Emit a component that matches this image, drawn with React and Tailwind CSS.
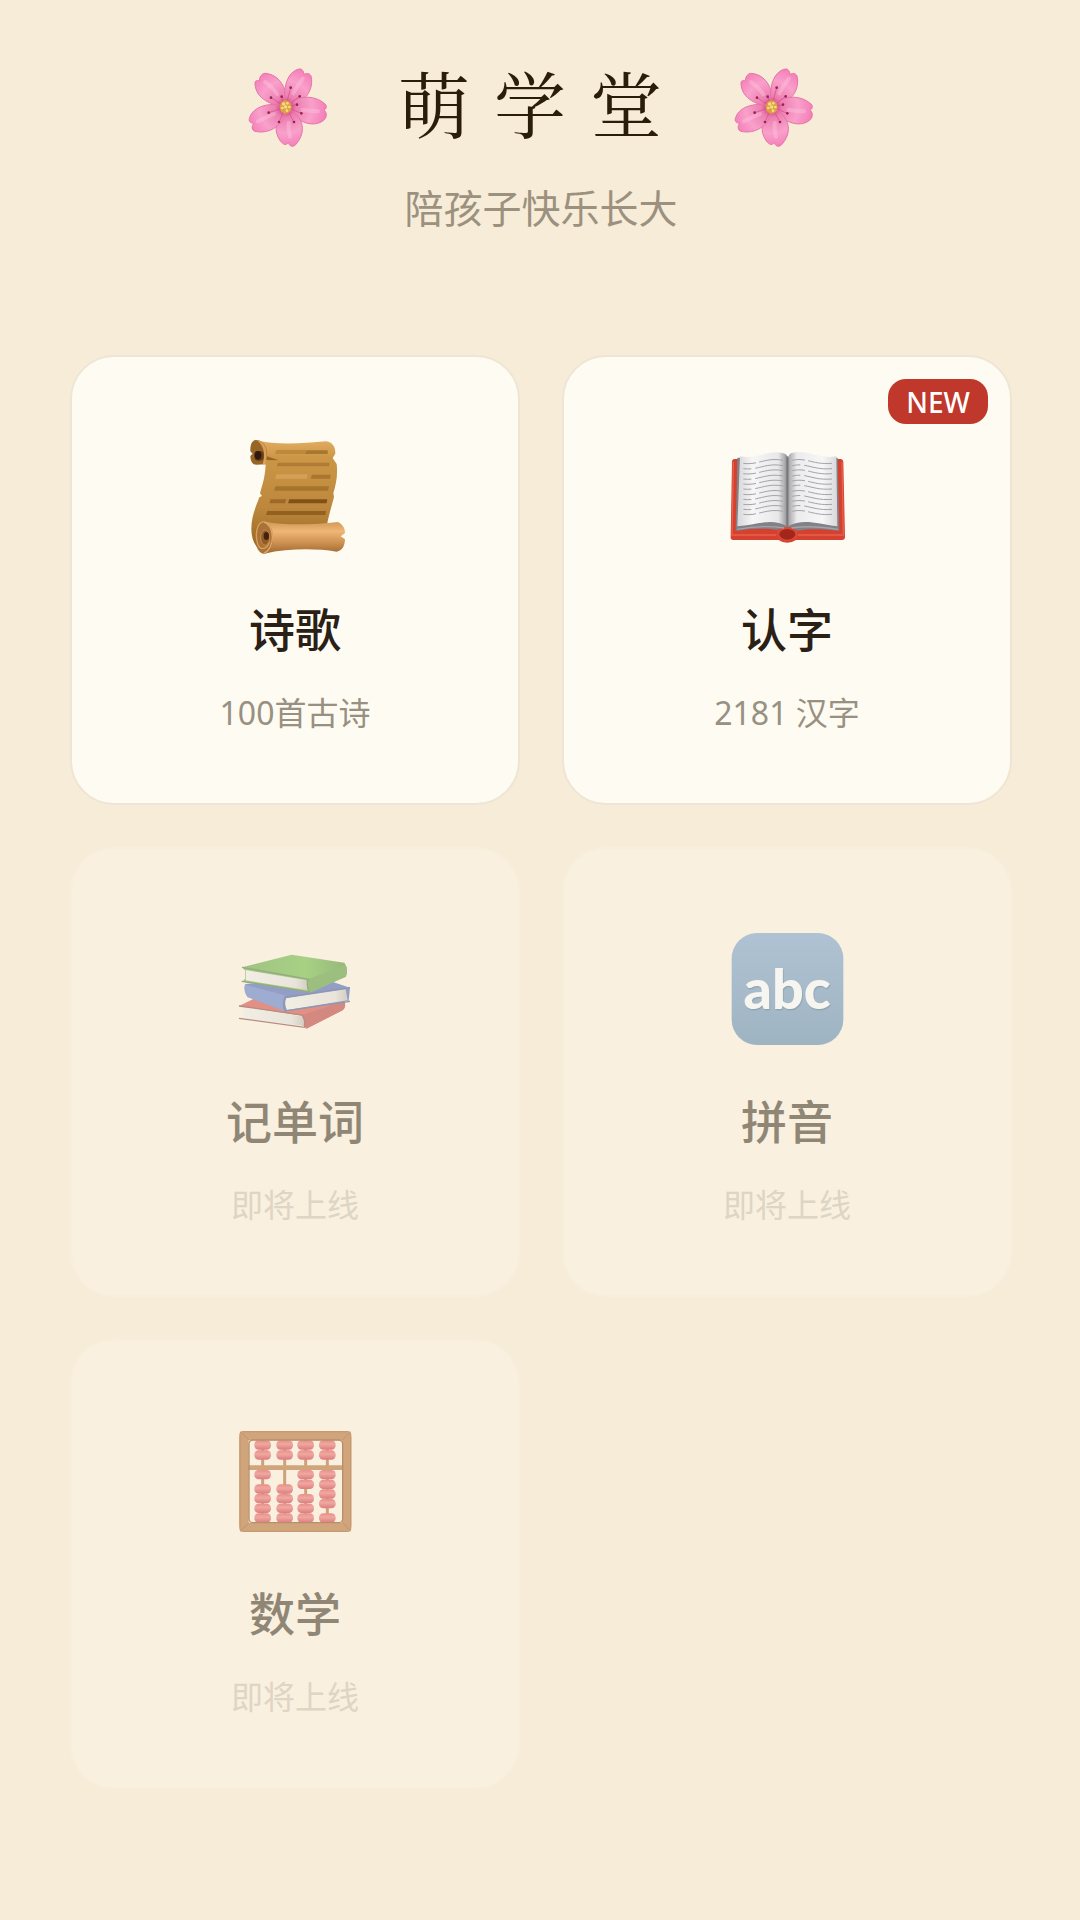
const sans = "font-['Noto_Sans','Noto_Sans_CJK_SC',sans-serif]";
const serif = "font-['Noto_Serif_CJK_SC','Noto_Serif_SC','Songti_SC','Noto_Sans_CJK_SC',serif]";

function Blossom({ id, className }) {
  const dots = [
    [164, 95],
    [191, 121],
    [105, 125],
    [137, 122],
    [98, 170],
    [196, 172],
    [129, 198],
    [174, 198],
    [183, 146],
  ];

  return (
    <svg viewBox="0 0 312 312" className={className} aria-hidden="true">
      <defs>
        <radialGradient id={id} gradientUnits="userSpaceOnUse" cx="149" cy="153" r="122">
          <stop offset="0.08" stopColor="#d2407f" />
          <stop offset="0.26" stopColor="#ec7fb0" />
          <stop offset="0.65" stopColor="#f9a0cb" />
          <stop offset="1" stopColor="#f47fb8" />
        </radialGradient>
      </defs>
      <g fill={`url(#${id})`} stroke="#e873aa" strokeWidth="3" strokeLinejoin="round">
        <path d="M149 153C108 148 60 130 57 84C56 73 63 72 70 75C70 63 76 54 86 52C126 54 158 92 149 153Z" />
        <path d="M149 153C138 96 154 46 190 39C199 38 202 45 204 55C214 50 224 52 226 64C233 104 204 146 149 153Z" />
        <path d="M149 153C172 120 232 112 267 144C274 151 271 158 264 163C273 169 273 181 266 190C240 216 186 206 149 153Z" />
        <path d="M149 153C108 188 116 242 140 262C147 268 153 266 157 259C160 271 169 274 178 267C209 234 211 184 149 153Z" />
        <path d="M149 153C110 136 50 148 40 188C38 198 44 201 53 202C46 211 47 223 57 226C98 236 150 208 149 153Z" />
      </g>
      <g fill="none" stroke="#ffc6e0" strokeWidth="12" strokeLinecap="round" opacity="0.4">
        <path d="M87 78Q111 94 124 115" />
        <path d="M200 68Q184 88 172 112" />
        <path d="M246 166Q220 164 200 162" />
        <path d="M162 242Q156 220 158 200" />
        <path d="M66 196Q90 184 114 174" />
      </g>
      <g stroke="#d24c8a" strokeWidth="2">
        {dots.map(([x, y]) => (
          <path key={`${x}-${y}`} d={`M149 153L${x} ${y}`} />
        ))}
      </g>
      <g fill="#96244f">
        {dots.map(([x, y]) => (
          <circle key={`${x}-${y}`} cx={x} cy={y} r="4" />
        ))}
      </g>
      <ellipse cx="149" cy="153" rx="18" ry="20" fill="#dda044" />
      <g fill="#f6dc80">
        <circle cx="143" cy="144" r="5" />
        <circle cx="154" cy="142" r="4" />
        <circle cx="149" cy="153" r="5" />
        <circle cx="160" cy="153" r="4" />
        <circle cx="139" cy="156" r="4" />
        <circle cx="153" cy="164" r="4" />
      </g>
    </svg>
  );
}

function ScrollIcon() {
  return (
    <svg viewBox="0 0 450 450" className="size-[150px]" aria-hidden="true">
      <defs>
        <linearGradient id="sheet" x1="0" y1="0" x2="0" y2="1">
          <stop offset="0" stopColor="#e2ad62" />
          <stop offset="0.16" stopColor="#cc9646" />
          <stop offset="0.6" stopColor="#bd883d" />
          <stop offset="1" stopColor="#96621f" />
        </linearGradient>
        <linearGradient id="roll" x1="0" y1="0" x2="0" y2="1">
          <stop offset="0" stopColor="#d09956" />
          <stop offset="0.3" stopColor="#efb675" />
          <stop offset="0.65" stopColor="#ce9252" />
          <stop offset="1" stopColor="#9f662d" />
        </linearGradient>
      </defs>
      <path
        d="M108 63C170 80 250 73 318 67C338 70 346 83 346 104L338 117L350 135C354 168 348 197 340 222L342 234C334 265 326 289 321 318L143 399C112 399 94 368 94 330C94 290 109 260 118 235L126 231L120 223C128 195 137 170 137 127L100 64Z"
        fill="url(#sheet)"
      />
      <path d="M108 63C94 65 91 78 91 97L98 104L91 111C92 128 97 137 109 137L137 136L137 123L176 124L141 112C143 84 130 64 108 63Z" fill="#976526" />
      <path d="M108 63C130 65 142 84 140 113L137 136L128 136C139 100 128 74 108 63Z" fill="#d8a05a" />
      <rect x="103" y="96" width="28" height="29" rx="10" fill="#6a3d19" />
      <ellipse cx="114" cy="109" rx="10" ry="13" fill="#2f190f" />
      <g fill="#a97630">
        <path d="M169 93H258V105H165Z" fill="#bd893d" />
        <path d="M260 94H323V105H255Z" />
        <path d="M174 131H328V142H170Z" fill="#ae7c34" />
        <path d="M169 166H263L260 179H166Z" fill="#d2a057" />
        <path d="M276 167H332L330 179H272Z" />
        <path d="M167 202H327L324 215H162Z" fill="#a6742d" />
        <path d="M152 241H199L195 253H148Z" fill="#9c6a27" />
        <path d="M208 241H322L320 253H204Z" fill="#835118" />
        <path d="M142 276H318L316 288H138Z" fill="#93611f" />
      </g>
      <path d="M136 308C200 321 290 316 353 309C368 315 375 328 375 342L362 352L375 361C374 382 367 395 350 398C285 388 208 388 132 404Z" fill="url(#roll)" />
      <ellipse cx="132" cy="356" rx="27" ry="48" fill="#a97238" />
      <path d="M132 308C108 310 105 350 114 377C123 397 145 389 149 365" fill="none" stroke="#d5a059" strokeWidth="4" />
      <path d="M132 309C165 319 166 388 132 403" fill="none" stroke="#e0a968" strokeWidth="4" />
      <path d="M133 333C153 332 156 373 135 379C119 377 117 339 133 333Z" fill="#925c29" stroke="#c58b49" strokeWidth="3" />
      <ellipse cx="139" cy="351" rx="8" ry="12" fill="#43230f" />
    </svg>
  );
}

function OpenBookIcon() {
  const lines = [91, 107, 122, 138, 153, 168, 184, 199, 214, 229, 244];

  return (
    <svg viewBox="6 -30 450 450" className="size-[150px]" aria-hidden="true">
      <defs>
        <linearGradient id="leftPage" x1="0" x2="1">
          <stop offset="0" stopColor="#d6d6d8" />
          <stop offset="0.3" stopColor="#f6f6f7" />
          <stop offset="0.82" stopColor="#e8e8ea" />
          <stop offset="1" stopColor="#939397" />
        </linearGradient>
        <linearGradient id="rightPage" x1="0" x2="1">
          <stop offset="0" stopColor="#a2a2a6" />
          <stop offset="0.18" stopColor="#ececee" />
          <stop offset="0.7" stopColor="#f6f6f7" />
          <stop offset="1" stopColor="#d8d8db" />
        </linearGradient>
      </defs>
      <path d="M74 90H391Q399 90 400 100L405 324Q405 333 395 333H258Q246 341 232 341Q216 341 206 333H70Q61 333 62 324L66 99Q66 90 74 90Z" fill="#d4412f" />
      <path d="M70 99L66 322M396 99L400 322" stroke="#ea5f4d" strokeWidth="4" />
      <path d="M67 318H199M263 318H398" stroke="#e55744" strokeWidth="6" />
      <ellipse cx="232" cy="314" rx="31" ry="23" fill="#dc4837" />
      <ellipse cx="232" cy="316" rx="24" ry="16" fill="#a3261c" />
      <path d="M82 86L77 306Q150 294 202 303Q222 292 233 294Q246 294 262 305Q320 296 388 306L383 86Z" fill="#818187" />
      <path d="M82 301Q160 287 222 297M245 297Q304 288 384 301" fill="none" stroke="#a4a4a9" strokeWidth="4" />
      <path d="M90 82C145 91 174 61 221 73Q232 76 232 86L231 292C187 266 144 286 82 292Z" fill="url(#leftPage)" />
      <path d="M379 82C322 91 292 60 245 72Q235 76 235 87L234 292C280 267 322 285 382 292Z" fill="url(#rightPage)" />
      <path d="M232 82V292" stroke="#77777c" strokeWidth="6" />
      <g fill="none" stroke="#a3a3a7" strokeWidth="3">
        {lines.map((y, i) => (
          <g key={y} strokeDasharray={i % 2 ? "24 12 200" : "38 10 200"}>
            <path d={`M100 ${y + 12}C144 ${y + 18} 168 ${y - 7} 219 ${y + 3}`} />
            <path d={`M247 ${y + 3}C288 ${y - 7} 309 ${y + 17} 366 ${y + 12}`} />
          </g>
        ))}
      </g>
    </svg>
  );
}

function BooksIcon() {
  return (
    <svg viewBox="0 -54 450 450" className="size-[150px] opacity-60" aria-hidden="true">
      <defs>
        <linearGradient id="greenCover" x1="0" x2="1">
          <stop offset="0" stopColor="#65a545" />
          <stop offset="0.6" stopColor="#72bd49" />
          <stop offset="1" stopColor="#569438" />
        </linearGradient>
        <linearGradient id="pages" x1="0" x2="1">
          <stop offset="0" stopColor="#f0eee9" />
          <stop offset="0.8" stopColor="#e0ddd7" />
          <stop offset="1" stopColor="#bcb9b1" />
        </linearGradient>
      </defs>
      <path d="M57 231L106 207L372 216Q381 232 369 243L260 299L246 286V260Z" fill="#d4504a" />
      <path d="M250 257L373 215Q379 232 368 244L258 299Q247 280 250 257Z" fill="#bd4542" />
      <path d="M67 234L245 262Q256 274 250 291L66 268Z" fill="url(#pages)" />
      <path d="M57 231L247 258Q259 276 253 295L57 268" fill="none" stroke="#8a4a44" strokeWidth="4" />
      <path d="M84 164L319 152L390 176L386 216L196 246L83 204Q70 184 76 165Z" fill="#4f69b4" />
      <path d="M75 167L194 199Q183 220 192 246L82 204Q69 187 75 167Z" fill="#6480c8" />
      <path d="M198 208L377 181L383 214L201 243Q192 226 198 208Z" fill="url(#pages)" />
      <path d="M390 176L198 204Q186 222 195 246L390 217" fill="none" stroke="#4c5c92" strokeWidth="4" />
      <path d="M66 115L215 77L373 101Q386 119 378 143L273 189L67 158L75 149V124Z" fill="url(#greenCover)" />
      <path d="M264 151L376 107Q386 124 376 143L272 189Q257 171 264 151Z" fill="#5f9f42" />
      <path d="M77 123L257 153Q266 166 260 183L77 154Z" fill="url(#pages)" />
      <path d="M66 115L265 151Q257 168 269 189L65 157" fill="none" stroke="#567d43" strokeWidth="4" />
    </svg>
  );
}

function AbcIcon() {
  return (
    <svg viewBox="6 -9 450 450" className="size-[150px]" aria-hidden="true">
      <defs>
        <linearGradient id="tile" x1="0" y1="0" x2="0" y2="1">
          <stop offset="0" stopColor="#afc2d3" />
          <stop offset="1" stopColor="#9fb4c2" />
        </linearGradient>
      </defs>
      <rect x="65" y="57" width="335" height="336" rx="76" fill="url(#tile)" />
      <text
        x="231"
        y="285"
        fontSize="167"
        textAnchor="middle"
        fill="#f7f5ef"
        className="font-['Lato',sans-serif] font-black drop-shadow-[2px_4px_2px_#8fa3b1]"
      >
        abc
      </text>
    </svg>
  );
}

function AbacusIcon() {
  // bead centres on each rod, top to bottom
  const rods = [
    { x: 128, beads: [108, 138, 197, 240, 269, 298, 327] },
    { x: 194, beads: [108, 138, 240, 269, 298, 327] },
    { x: 257, beads: [108, 138, 197, 226, 269, 298, 327] },
    { x: 322, beads: [108, 138, 197, 226, 255, 284, 327] },
  ];

  return (
    <svg viewBox="0 -18 450 450" className="size-[150px]" aria-hidden="true">
      <defs>
        <linearGradient id="bead" x1="0" y1="0" x2="0" y2="1">
          <stop offset="0" stopColor="#e78f89" />
          <stop offset="0.4" stopColor="#f0a8a0" />
          <stop offset="1" stopColor="#dd7d80" />
        </linearGradient>
      </defs>
      {rods.map(({ x, beads }) => (
        <g key={x}>
          <path d={`M${x} 92V340`} stroke="#cda27a" strokeWidth="9" />
          {beads.map((y) => (
            <rect key={y} x={x - 25} y={y - 14} width="50" height="28" rx="13" fill="url(#bead)" />
          ))}
        </g>
      ))}
      <path d="M84 176H370" stroke="#d0a57c" strokeWidth="14" />
      <rect x="72" y="80" width="308" height="275" rx="6" fill="none" stroke="#d0a57c" strokeWidth="28" />
      <rect x="87" y="93" width="281" height="248" rx="12" fill="none" stroke="#b88d68" strokeWidth="4" />
      <rect x="60" y="68" width="332" height="299" rx="10" fill="none" stroke="#c79a70" strokeWidth="4" />
      <path d="M60 68L87 93M392 68L368 93M60 367L87 341M392 367L368 341" stroke="#bb8a61" strokeWidth="2" />
    </svg>
  );
}

const courses = [
  { name: "诗歌", note: "100首古诗", Icon: ScrollIcon, open: true },
  { name: "认字", note: "2181 汉字", Icon: OpenBookIcon, open: true, badge: "NEW" },
  { name: "记单词", note: "即将上线", Icon: BooksIcon },
  { name: "拼音", note: "即将上线", Icon: AbcIcon },
  { name: "数学", note: "即将上线", Icon: AbacusIcon },
];

function CourseCard({ name, note, Icon, open, badge }) {
  return (
    <button
      type="button"
      disabled={!open}
      className={`relative flex aspect-square flex-col items-center justify-start rounded-[44px] border-2 pt-[62px] ${
        open
          ? "border-[#eee5d5] bg-[#fefbf2] text-[#2a2015]"
          : "border-[#f8eedb] bg-[#f9f0df] text-[#908675]"
      }`}
    >
      {badge && (
        <span className="absolute top-[22px] right-[22px] flex h-[45px] w-[100px] items-center justify-center rounded-[18px] bg-[#c0372b] text-[28px] font-medium text-white">
          {badge}
        </span>
      )}
      <Icon />
      <span className="mt-[30px] text-[46px] leading-[60px] font-medium">{name}</span>
      <span
        className={`mt-8 text-[32px] leading-[44px] ${
          open ? "text-[#989081]" : "text-[#ded5c5]"
        }`}
      >
        {note}
      </span>
    </button>
  );
}

export default function App() {
  return (
    <main className={`min-h-screen bg-[#f7ecd7] pt-14 pr-[68px] pb-[130px] pl-[70px] ${sans}`}>
      <header className="flex flex-col items-center">
        <div className="flex items-center pr-5">
          <Blossom id="petalLeft" className="size-[104px]" />
          <h1 className={`mr-9 ml-[58px] pb-[14px] text-[72px] leading-[90px] tracking-[24px] text-[#2a1d0c] ${serif}`}>
            萌学堂
          </h1>
          <Blossom id="petalRight" className="size-[104px]" />
        </div>
        <p className="mt-6 text-[39px] leading-[48px] text-[#9b917e]">陪孩子快乐长大</p>
      </header>

      <section className="mt-[123px] grid grid-cols-2 gap-[42px]">
        {courses.map((course) => (
          <CourseCard key={course.name} {...course} />
        ))}
      </section>
    </main>
  );
}
